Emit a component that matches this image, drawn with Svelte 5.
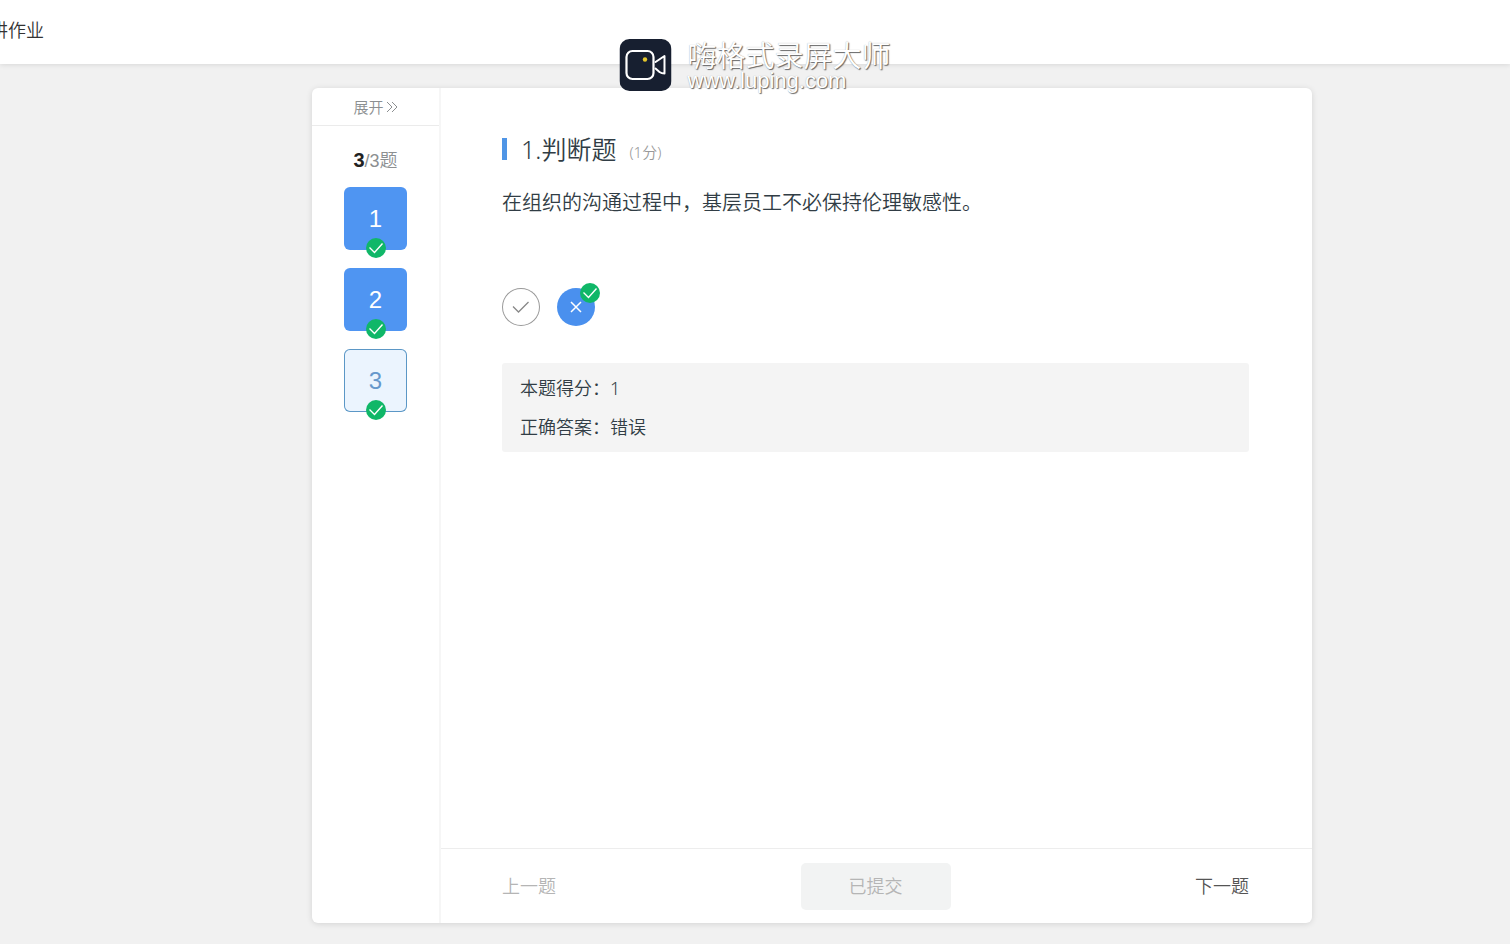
<script>
  const questions = [1, 2, 3]
  let current = $state(3)
  let answer = $state('wrong')
</script>

{#snippet badge()}
  <svg class="badge" viewBox="0 0 20 20" aria-hidden="true">
    <circle cx="10" cy="10" r="10" fill="#10b768" />
    <path d="M3.500 9.500l5 5L16.500 5.500" fill="none" stroke="#fff" stroke-width="1.400" />
  </svg>
{/snippet}

<div class="page">
  <header>
    <h1>讲作业</h1>
    <div class="watermark">
      <svg class="logo" viewBox="0 0 52 52" aria-hidden="true">
        <rect width="52" height="52" rx="10" fill="#171f30" />
        <rect x="7" y="12" width="27" height="28" rx="6" fill="none" stroke="#fff" stroke-width="2.2" />
        <path d="M36 23l9-6v17.500q-3 0-5-1.500M36 29.500l4 3.500" fill="none" stroke="#fff" stroke-width="2" stroke-linejoin="round" stroke-linecap="round" />
        <circle cx="25.500" cy="20.500" r="2.200" fill="#e5c72c" />
      </svg>
      <div class="brand">
        <span class="brand-name">嗨格式录屏大师</span>
        <span class="brand-url">www.luping.com</span>
      </div>
    </div>
  </header>

  <main>
    <div class="card">
      <aside>
        <button class="expand">
          展开
          <svg viewBox="0 0 12 12" aria-hidden="true">
            <path d="M1 1l5 5-5 5M6 1l5 5-5 5" fill="none" stroke="#8c8f91" />
          </svg>
        </button>
        <p class="count"><b>3</b>/3题</p>
        <nav>
          {#each questions as n}
            <button class="number" class:active={n === current} onclick={() => (current = n)}>
              {n}
              {@render badge()}
            </button>
          {/each}
        </nav>
      </aside>

      <section>
        <div class="question">
          <h2>1.判断题 <small>(1分)</small></h2>
          <p class="stem">在组织的沟通过程中，基层员工不必保持伦理敏感性。</p>

          <div class="options">
            <button class="option" class:chosen={answer === 'right'} aria-label="正确" onclick={() => (answer = 'right')}>
              <svg viewBox="0 0 38 38" aria-hidden="true">
                <path d="M11 18.500l5.500 5.500L26.500 14" fill="none" stroke="currentColor" stroke-width="1.300" />
              </svg>
            </button>
            <button class="option" class:chosen={answer === 'wrong'} aria-label="错误" onclick={() => (answer = 'wrong')}>
              <svg viewBox="0 0 38 38" aria-hidden="true">
                <path d="M14 14l10 10M24 14L14 24" fill="none" stroke="currentColor" stroke-width="1.500" />
              </svg>
              {@render badge()}
            </button>
          </div>

          <div class="result">
            <p>本题得分：1</p>
            <p>正确答案：错误</p>
          </div>
        </div>

        <footer>
          <button class="step" disabled>上一题</button>
          <button class="submit" disabled>已提交</button>
          <button class="step next">下一题</button>
        </footer>
      </section>
    </div>
  </main>
</div>

<style>
  :global(body) {
    background: #f1f1f1;
  }
  .page {
    display: flex;
    flex-direction: column;
    min-height: 100vh;
    overflow-x: hidden;
    color: #313d45;
    font-family: "Noto Sans", "Noto Sans CJK SC", sans-serif;
    font-weight: 350;
  }
  h1, h2, p {
    margin: 0;
    font-weight: inherit;
  }
  button {
    padding: 0;
    border: 0;
    background: none;
    color: inherit;
    font: inherit;
    cursor: pointer;
  }
  header {
    position: relative;
    box-sizing: border-box;
    height: 64px;
    padding-top: 18px;
    background: #fff;
    box-shadow: 0 1px 5px rgba(0, 0, 0, 0.1);
  }
  h1 {
    margin-left: -10px;
    font-size: 18px;
    line-height: 24px;
    color: #333;
  }
  .watermark {
    position: absolute;
    z-index: 2;
    top: 39px;
    left: 50%;
    display: flex;
    gap: 16px;
    transform: translateX(-50%);
    white-space: nowrap;
  }
  .logo {
    width: 52px;
    height: 52px;
  }
  .brand {
    display: flex;
    flex-direction: column;
    color: #fff;
    text-shadow: 1px 1px 1px #666, 0 0 1px #aaa;
  }
  .brand-name {
    font-size: 29px;
    line-height: 34px;
  }
  .brand-url {
    font-family: "Liberation Sans", Arial, sans-serif;
    font-size: 22px;
    line-height: 16px;
  }
  main {
    display: flex;
    flex: 1;
    justify-content: center;
    padding: 24px 0 21px 114px;
  }
  .card {
    display: flex;
    width: 100%;
    max-width: 1000px;
    border-radius: 6px;
    background: #fff;
    box-shadow: 0 1px 6px rgba(0, 0, 0, 0.12);
  }
  aside {
    width: 127px;
    border-right: 2px solid #f6f6f6;
    text-align: center;
  }
  .expand {
    display: flex;
    align-items: center;
    justify-content: center;
    gap: 2px;
    width: 100%;
    height: 38px;
    border-bottom: 1px solid #ebebeb;
    font-size: 15px;
    color: #8c8f91;
  }
  .expand svg {
    width: 12px;
    height: 12px;
  }
  .count {
    margin-top: 21px;
    font-family: "Liberation Sans", Arial, "Noto Sans CJK SC", sans-serif;
    font-size: 18px;
    line-height: 26px;
    color: #8c8f91;
  }
  .count b {
    font-size: 20px;
    font-weight: 700;
    color: #222;
  }
  nav {
    display: flex;
    flex-direction: column;
    align-items: center;
    gap: 18px;
    margin-top: 13px;
  }
  .number {
    position: relative;
    width: 63px;
    height: 63px;
    border-radius: 6px;
    background: #4f95f2;
    color: #fff;
    font-family: "Liberation Sans", Arial, sans-serif;
    font-size: 24px;
    line-height: 24px;
  }
  .number.active {
    box-shadow: inset 0 0 0 1px #5b97c6;
    background: #ebf4fe;
    color: #6698cc;
  }
  .badge {
    position: absolute;
    width: 20px;
    height: 20px;
  }
  .number .badge {
    bottom: -8px;
    left: calc(50% - 10px);
  }
  section {
    display: flex;
    flex: 1;
    flex-direction: column;
  }
  .question {
    flex: 1;
    padding: 43px 63px 0 61px;
  }
  h2 {
    display: flex;
    align-items: center;
    font-size: 25px;
    line-height: 36px;
  }
  h2::before {
    content: "";
    width: 5px;
    height: 22px;
    margin-right: 14px;
    background: #4f95e6;
  }
  h2 small {
    margin: 6px 0 0 13px;
    font-size: 15px;
    line-height: 20px;
    color: #999;
  }
  .stem {
    margin-top: 21px;
    font-size: 20px;
    line-height: 30px;
  }
  .options {
    display: flex;
    gap: 17px;
    margin-top: 70px;
  }
  .option {
    position: relative;
    width: 38px;
    height: 38px;
    border-radius: 50%;
    box-shadow: inset 0 0 0 1px #999;
    color: #888;
  }
  .option > svg:first-child {
    display: block;
  }
  .option.chosen {
    background: #4a90ee;
    box-shadow: none;
    color: #fff;
  }
  .option .badge {
    top: -5px;
    right: -5px;
  }
  .result {
    display: flex;
    flex-direction: column;
    gap: 13px;
    margin-top: 37px;
    padding: 12px 18px;
    border-radius: 3px;
    background: #f4f4f4;
    font-size: 18px;
    line-height: 26px;
  }
  footer {
    display: flex;
    align-items: center;
    justify-content: space-between;
    height: 74px;
    padding: 0 63px 0 61px;
    border-top: 1px solid #ededed;
    font-size: 18px;
    line-height: 24px;
  }
  .step {
    color: #555;
  }
  .step:disabled {
    color: #b5b5b5;
  }
  .submit {
    width: 150px;
    height: 47px;
    border-radius: 5px;
    background: #f2f3f3;
    color: #b5b5b5;
  }
</style>
